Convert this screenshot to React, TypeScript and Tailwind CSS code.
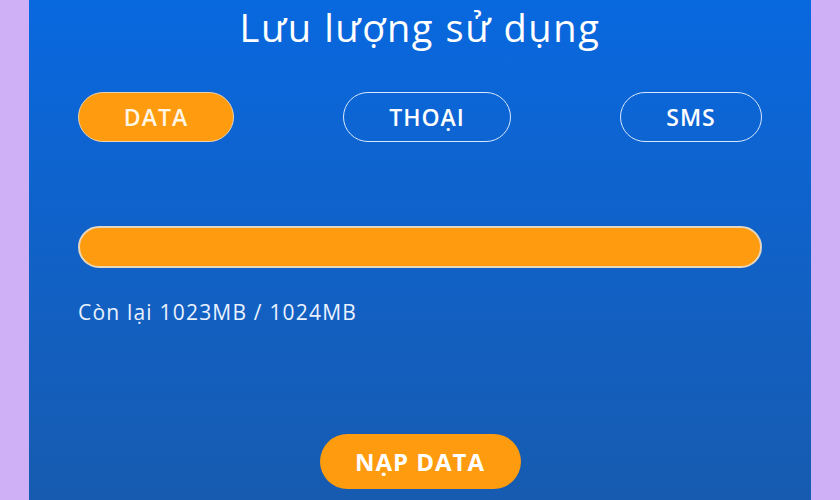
import React from "react";

export default function App() {
  const font = { fontFamily: '"Open Sans", "Noto Sans", Arial, sans-serif' };
  return (
    <div className="w-[840px] h-[500px] bg-[#cfaff6] overflow-hidden" style={font}>
      <div className="ml-[29px] w-[782px] h-[500px] bg-gradient-to-b from-[#0868df] to-[#165bb0] px-[49px] flex flex-col">
        <h1 className="text-white text-[38px] leading-none text-center mt-[8px] h-[44px] tracking-[1.6px]">
          Lưu lượng sử dụng
        </h1>
        <div className="flex justify-between mt-[40px]">
          <button className="w-[156px] h-[50px] rounded-full bg-[#ff9b0e] border border-[#e8d2b0] text-[#fff6e6] text-[23px] font-semibold tracking-[1px]">
            DATA
          </button>
          <button className="w-[168px] h-[50px] rounded-full border border-[#d8e8ff] text-white text-[23px] font-semibold tracking-[1px]">
            THOẠI
          </button>
          <button className="w-[142px] h-[50px] rounded-full border border-[#d8e8ff] text-white text-[23px] font-semibold tracking-[1px]">
            SMS
          </button>
        </div>
        <div className="mt-[84px] h-[42px] rounded-full bg-[#ff9b0e] border-2 border-[#e6d6bc]"></div>
        <p className="mt-[29px] text-[#eaf2ff] text-[21px] font-medium leading-[30px] tracking-[1.2px]">
          Còn lại 1023MB / 1024MB
        </p>
        <div className="flex justify-center mt-[107px]">
          <button className="w-[201px] h-[55px] rounded-full bg-[#ff9b0e] text-white text-[24px] font-bold tracking-[1px]">
            NẠP DATA
          </button>
        </div>
      </div>
    </div>
  );
}
